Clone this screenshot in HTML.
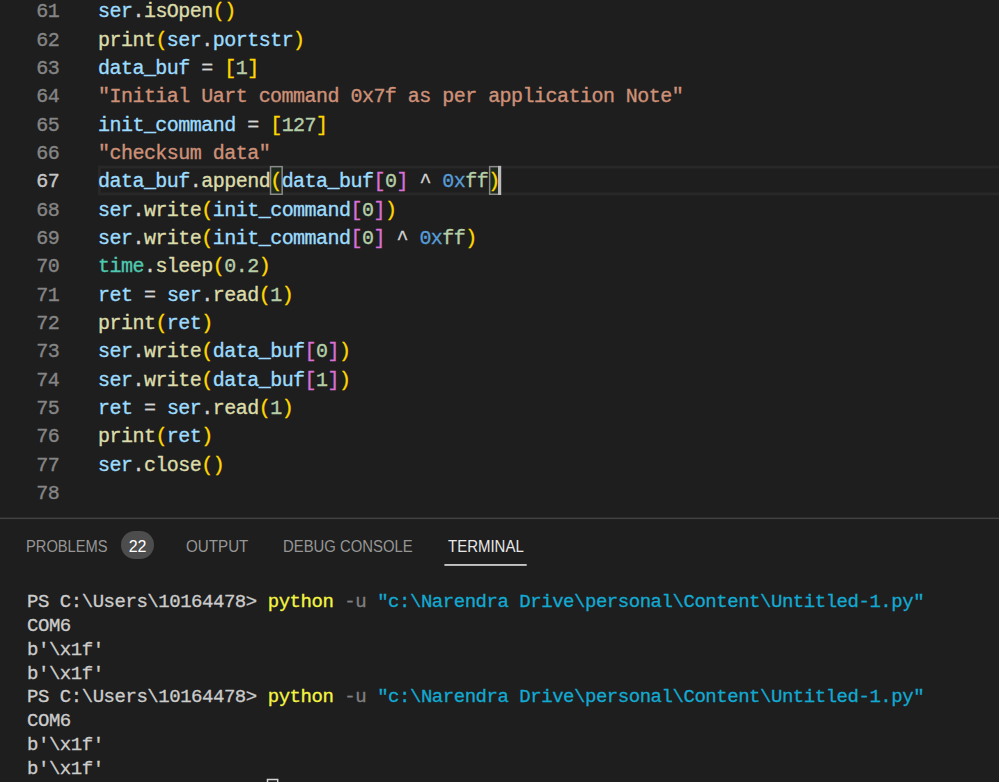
<!DOCTYPE html>
<html><head><meta charset="utf-8"><title>Untitled-1.py</title>
<style>
html,body{margin:0;padding:0;background:#1e1e1e;}
body{width:999px;height:782px;overflow:hidden;position:relative;}
.ed{font-family:"Liberation Mono",monospace;font-size:20.0px;letter-spacing:-0.5270px;white-space:pre;-webkit-text-stroke:0.35px currentColor;}
.ln{position:absolute;left:0;width:59.3px;text-align:right;color:#858585;line-height:20px;height:20px;}
.ln.act{color:#c6c6c6;}
.cl{position:absolute;left:98px;line-height:20px;height:20px;color:#d4d4d4;}
.tab{position:absolute;top:536.6px;height:20px;line-height:20px;font-family:"Liberation Sans",sans-serif;font-size:16.8px;color:#969696;white-space:pre;transform-origin:0 50%;}
.badge{position:absolute;left:120.8px;top:531.2px;width:33.5px;height:27.8px;border-radius:14px;background:#4d4d4d;color:#fff;font-family:"Liberation Sans",sans-serif;font-size:16px;line-height:31.3px;text-align:center;}
.tm{font-family:"Liberation Mono",monospace;font-size:19.0px;letter-spacing:-0.4619px;white-space:pre;}
.tm{-webkit-text-stroke:0.3px currentColor;}
.tl{position:absolute;left:27px;line-height:20px;height:20px;color:#cccccc;}
</style></head><body>

<svg width="999" height="782" viewBox="0 0 999 782" style="position:absolute;left:0;top:0">
<!-- current line highlight -->
<rect x="99.4" y="167" width="910" height="26.9" fill="none" stroke="#282828" stroke-width="2.8"/>
<!-- bracket match boxes -->
<rect x="270.55" y="166.65" width="11.6" height="27.6" fill="#1f2a1f" stroke="#8a8a8a" stroke-width="1.5"/>
<rect x="489.65" y="166.65" width="10.6" height="27.6" fill="#1f2a1f" stroke="#8a8a8a" stroke-width="1.5"/>
<!-- editor cursor -->
<rect x="498" y="165.9" width="3.2" height="29.1" fill="#bcbcbc"/>
<!-- panel top border -->
<rect x="0" y="517.6" width="999" height="1.5" fill="#424242"/>
<!-- active tab underline -->
<rect x="444.4" y="564" width="82.3" height="1.9" fill="#c4c4c4"/>
<!-- terminal cursor (unfocused outline) -->
<rect x="267.5" y="779.5" width="10.2" height="22" fill="none" stroke="#d2d2d2" stroke-width="1.5"/>
</svg>
<div class="ed">
<div class="ln" style="top:2.18px">61</div>
<div class="cl" style="top:2.18px"><span style="color:#9cdcfe">ser</span><span style="color:#d4d4d4">.</span><span style="color:#dcdcaa">isOpen</span><span style="color:#ffd700">()</span></div>
<div class="ln" style="top:30.51px">62</div>
<div class="cl" style="top:30.51px"><span style="color:#dcdcaa">print</span><span style="color:#ffd700">(</span><span style="color:#9cdcfe">ser</span><span style="color:#d4d4d4">.</span><span style="color:#9cdcfe">portstr</span><span style="color:#ffd700">)</span></div>
<div class="ln" style="top:58.84px">63</div>
<div class="cl" style="top:58.84px"><span style="color:#9cdcfe">data_buf</span><span style="color:#d4d4d4"> = </span><span style="color:#ffd700">[</span><span style="color:#b5cea8">1</span><span style="color:#ffd700">]</span></div>
<div class="ln" style="top:87.18px">64</div>
<div class="cl" style="top:87.18px"><span style="color:#ce9178">"Initial Uart command 0x7f as per application Note"</span></div>
<div class="ln" style="top:115.51px">65</div>
<div class="cl" style="top:115.51px"><span style="color:#9cdcfe">init_command</span><span style="color:#d4d4d4"> = </span><span style="color:#ffd700">[</span><span style="color:#b5cea8">127</span><span style="color:#ffd700">]</span></div>
<div class="ln" style="top:143.84px">66</div>
<div class="cl" style="top:143.84px"><span style="color:#ce9178">"checksum data"</span></div>
<div class="ln act" style="top:172.18px">67</div>
<div class="cl" style="top:172.18px"><span style="color:#9cdcfe">data_buf</span><span style="color:#d4d4d4">.</span><span style="color:#dcdcaa">append</span><span style="color:#ffd700">(</span><span style="color:#9cdcfe">data_buf</span><span style="color:#da70d6">[</span><span style="color:#b5cea8">0</span><span style="color:#da70d6">]</span><span style="color:#d4d4d4"> ^ </span><span style="color:#569cd6">0x</span><span style="color:#b5cea8">ff</span><span style="color:#ffd700">)</span></div>
<div class="ln" style="top:200.51px">68</div>
<div class="cl" style="top:200.51px"><span style="color:#9cdcfe">ser</span><span style="color:#d4d4d4">.</span><span style="color:#dcdcaa">write</span><span style="color:#ffd700">(</span><span style="color:#9cdcfe">init_command</span><span style="color:#da70d6">[</span><span style="color:#b5cea8">0</span><span style="color:#da70d6">]</span><span style="color:#ffd700">)</span></div>
<div class="ln" style="top:228.84px">69</div>
<div class="cl" style="top:228.84px"><span style="color:#9cdcfe">ser</span><span style="color:#d4d4d4">.</span><span style="color:#dcdcaa">write</span><span style="color:#ffd700">(</span><span style="color:#9cdcfe">init_command</span><span style="color:#da70d6">[</span><span style="color:#b5cea8">0</span><span style="color:#da70d6">]</span><span style="color:#d4d4d4"> ^ </span><span style="color:#569cd6">0x</span><span style="color:#b5cea8">ff</span><span style="color:#ffd700">)</span></div>
<div class="ln" style="top:257.17px">70</div>
<div class="cl" style="top:257.17px"><span style="color:#4ec9b0">time</span><span style="color:#d4d4d4">.</span><span style="color:#dcdcaa">sleep</span><span style="color:#ffd700">(</span><span style="color:#b5cea8">0.2</span><span style="color:#ffd700">)</span></div>
<div class="ln" style="top:285.51px">71</div>
<div class="cl" style="top:285.51px"><span style="color:#9cdcfe">ret</span><span style="color:#d4d4d4"> = </span><span style="color:#9cdcfe">ser</span><span style="color:#d4d4d4">.</span><span style="color:#dcdcaa">read</span><span style="color:#ffd700">(</span><span style="color:#b5cea8">1</span><span style="color:#ffd700">)</span></div>
<div class="ln" style="top:313.84px">72</div>
<div class="cl" style="top:313.84px"><span style="color:#dcdcaa">print</span><span style="color:#ffd700">(</span><span style="color:#9cdcfe">ret</span><span style="color:#ffd700">)</span></div>
<div class="ln" style="top:342.17px">73</div>
<div class="cl" style="top:342.17px"><span style="color:#9cdcfe">ser</span><span style="color:#d4d4d4">.</span><span style="color:#dcdcaa">write</span><span style="color:#ffd700">(</span><span style="color:#9cdcfe">data_buf</span><span style="color:#da70d6">[</span><span style="color:#b5cea8">0</span><span style="color:#da70d6">]</span><span style="color:#ffd700">)</span></div>
<div class="ln" style="top:370.51px">74</div>
<div class="cl" style="top:370.51px"><span style="color:#9cdcfe">ser</span><span style="color:#d4d4d4">.</span><span style="color:#dcdcaa">write</span><span style="color:#ffd700">(</span><span style="color:#9cdcfe">data_buf</span><span style="color:#da70d6">[</span><span style="color:#b5cea8">1</span><span style="color:#da70d6">]</span><span style="color:#ffd700">)</span></div>
<div class="ln" style="top:398.84px">75</div>
<div class="cl" style="top:398.84px"><span style="color:#9cdcfe">ret</span><span style="color:#d4d4d4"> = </span><span style="color:#9cdcfe">ser</span><span style="color:#d4d4d4">.</span><span style="color:#dcdcaa">read</span><span style="color:#ffd700">(</span><span style="color:#b5cea8">1</span><span style="color:#ffd700">)</span></div>
<div class="ln" style="top:427.17px">76</div>
<div class="cl" style="top:427.17px"><span style="color:#dcdcaa">print</span><span style="color:#ffd700">(</span><span style="color:#9cdcfe">ret</span><span style="color:#ffd700">)</span></div>
<div class="ln" style="top:455.51px">77</div>
<div class="cl" style="top:455.51px"><span style="color:#9cdcfe">ser</span><span style="color:#d4d4d4">.</span><span style="color:#dcdcaa">close</span><span style="color:#ffd700">()</span></div>
<div class="ln" style="top:483.84px">78</div>
</div>
<div class="tab" style="left:25.8px;transform:scaleX(0.875)">PROBLEMS</div>
<div class="badge">22</div>
<div class="tab" style="left:186.2px;transform:scaleX(0.904)">OUTPUT</div>
<div class="tab" style="left:282.6px;transform:scaleX(0.886)">DEBUG CONSOLE</div>
<div class="tab" style="left:447.6px;color:#e7e7e7;transform:scaleX(0.893)">TERMINAL</div>
<div class="tm">
<div class="tl" style="top:591.84px"><span style="color:#cccccc">PS C:\Users\10164478&gt; </span><span style="color:#f5f543">python</span><span style="color:#cccccc"> </span><span style="color:#808080">-u</span><span style="color:#cccccc"> </span><span style="color:#13aad2">"c:\Narendra Drive\personal\Content\Untitled-1.py"</span></div>
<div class="tl" style="top:615.74px"><span style="color:#cccccc">COM6</span></div>
<div class="tl" style="top:639.64px"><span style="color:#cccccc">b'\x1f'</span></div>
<div class="tl" style="top:663.54px"><span style="color:#cccccc">b'\x1f'</span></div>
<div class="tl" style="top:687.44px"><span style="color:#cccccc">PS C:\Users\10164478&gt; </span><span style="color:#f5f543">python</span><span style="color:#cccccc"> </span><span style="color:#808080">-u</span><span style="color:#cccccc"> </span><span style="color:#13aad2">"c:\Narendra Drive\personal\Content\Untitled-1.py"</span></div>
<div class="tl" style="top:711.34px"><span style="color:#cccccc">COM6</span></div>
<div class="tl" style="top:735.24px"><span style="color:#cccccc">b'\x1f'</span></div>
<div class="tl" style="top:759.14px"><span style="color:#cccccc">b'\x1f'</span></div>
<div class="tl" style="top:783.04px"><span style="color:#cccccc">PS C:\Users\10164478&gt; </span></div>
</div>
</body></html>
